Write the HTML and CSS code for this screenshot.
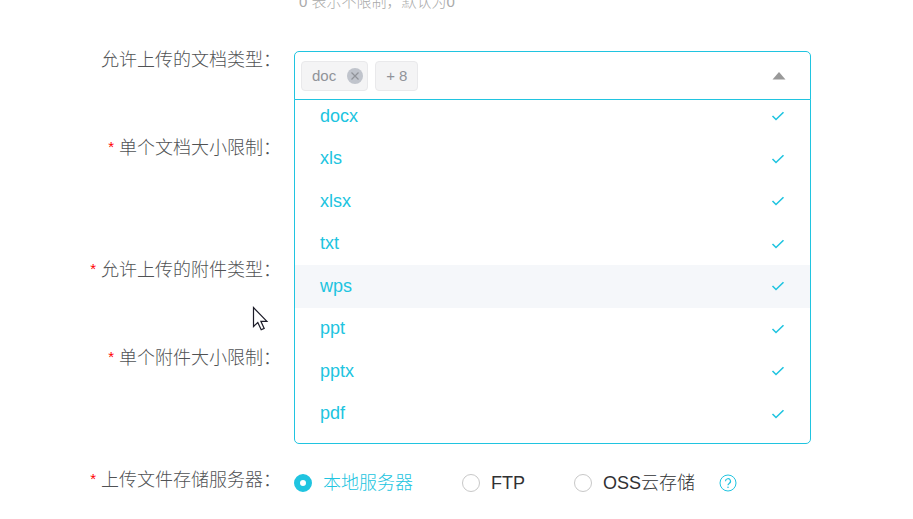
FILE: index.html
```html
<!DOCTYPE html>
<html lang="zh-CN">
<head>
  <meta charset="UTF-8">
  <meta name="viewport" content="width=device-width, initial-scale=1.0">
  <title>上传文件</title>
  <link rel="stylesheet" href="styles.css">
</head>
<body>
  <svg width="0" height="0" class="symbols">
    <symbol id="tick" viewBox="0 0 14 10"><path d="M1.500 5l3.500 3.500L12.500 1.200" fill="none" stroke="#20c4e0" stroke-width="1.600"/></symbol>
  </svg>

  <form class="form">
    <p class="hint">0 表示不限制，默认为0</p>

    <div class="form-item">
      <div class="form-label" id="docTypeLabel">允许上传的文档类型：</div>
      <div class="form-content">
        <div class="select">
          <div class="select-box">
            <span class="tag">doc
              <button type="button" class="tag-close" aria-label="doc">
                <svg viewBox="0 0 16 16" width="16" height="16"><circle cx="8" cy="8" r="8" fill="#c0c4cc"/><path d="M4.500 4.500l7 7M11.500 4.500l-7 7" stroke="#909399" stroke-width="1.200"/></svg>
              </button>
            </span>
            <span class="tag">+ 8</span>
            <button type="button" class="select-arrow" aria-labelledby="docTypeLabel">
              <svg viewBox="0 0 14 8" width="14" height="8"><path d="M7 0l6.500 7.500h-13z" fill="#999"/></svg>
            </button>
          </div>
          <div class="dropdown">
            <div class="options">
              <label class="option">docx<input type="checkbox" checked><svg class="tick"><use href="#tick"/></svg></label>
              <label class="option">xls<input type="checkbox" checked><svg class="tick"><use href="#tick"/></svg></label>
              <label class="option">xlsx<input type="checkbox" checked><svg class="tick"><use href="#tick"/></svg></label>
              <label class="option">txt<input type="checkbox" checked><svg class="tick"><use href="#tick"/></svg></label>
              <label class="option hover">wps<input type="checkbox" checked><svg class="tick"><use href="#tick"/></svg></label>
              <label class="option">ppt<input type="checkbox" checked><svg class="tick"><use href="#tick"/></svg></label>
              <label class="option">pptx<input type="checkbox" checked><svg class="tick"><use href="#tick"/></svg></label>
              <label class="option">pdf<input type="checkbox" checked><svg class="tick"><use href="#tick"/></svg></label>
            </div>
          </div>
        </div>
      </div>
    </div>

    <div class="form-item tall">
      <div class="form-label required">单个文档大小限制：</div>
    </div>

    <div class="form-item">
      <div class="form-label required">允许上传的附件类型：</div>
    </div>

    <div class="form-item tall">
      <div class="form-label required">单个附件大小限制：</div>
    </div>

    <div class="form-item last">
      <div class="form-label required" id="serverLabel">上传文件存储服务器：</div>
      <div class="form-content radio-group" role="radiogroup" aria-labelledby="serverLabel">
        <label class="radio"><input type="radio" name="server" checked><span>本地服务器</span></label>
        <label class="radio"><input type="radio" name="server"><span>FTP</span></label>
        <label class="radio"><input type="radio" name="server"><span>OSS云存储</span></label>
        <button type="button" class="help" aria-label="OSS云存储">
          <svg viewBox="0 0 18 18" width="18" height="18" fill="none" stroke="#20c4e0"><circle cx="9" cy="9" r="8"/><path d="M6.500 7.200a2.500 2.500 0 1 1 3.700 2.200c-.8.500-1.200.9-1.200 1.900" stroke-width="1.200"/><circle cx="9" cy="13.200" r=".8" fill="#20c4e0" stroke="none"/></svg>
        </button>
      </div>
    </div>
  </form>

  <svg class="cursor" viewBox="0 0 17 26" width="17" height="26"><path d="M1.500 1.500v19l4.300-4 3.400 7.300 3-1.400-3.300-7.100h6z" fill="#fff" stroke="#1c1c28" stroke-width="1.200"/></svg>
</body>
</html>
```

FILE: styles.css
```css
body {
  margin: 0;
  background: #fff;
  color: #303133;
  font-family: "Liberation Sans", "Noto Sans CJK SC", sans-serif;
  font-size: 18px;
  font-weight: 300;
}
button {
  display: flex;
  padding: 0;
  border: none;
  background: none;
  cursor: pointer;
}
.symbols {
  display: block;
}
.form {
  padding-right: 102px;
}
.hint {
  height: 51px;
  margin: 0 0 0 299px;
  color: #aaa;
  font-size: 15px;
  line-height: 4px;
}
.form-item {
  display: flex;
  gap: 13px;
  min-height: 88px;
}
.form-item.tall {
  min-height: 122px;
}
.form-item.last {
  min-height: 40px;
}
.form-label {
  flex: none;
  width: 281px;
  color: #505254;
  line-height: 18px;
  text-align: right;
}
.form-label.required::before {
  content: "*";
  margin-right: 5px;
  color: #f00;
  font-size: 15px;
  line-height: 1;
  vertical-align: 2px;
}
.form-content {
  flex: 1;
}

/* multi select */
.select {
  position: relative;
}
.select-box {
  display: flex;
  align-items: center;
  gap: 7px;
  box-sizing: border-box;
  height: 49px;
  padding: 0 24px 0 6px;
  border: 1px solid #20c4e0;
  border-radius: 5px 5px 0 0;
}
.tag {
  display: flex;
  align-items: center;
  gap: 11px;
  box-sizing: border-box;
  height: 30px;
  padding: 0 10px;
  border: 1px solid #e9e9eb;
  border-radius: 4px;
  background: #f4f4f5;
  color: #909399;
  font-size: 15px;
}
.tag:first-child {
  padding-right: 4px;
}
.select-arrow {
  margin-left: auto;
}
.dropdown {
  position: absolute;
  top: 48px;
  left: 0;
  right: 0;
  z-index: 1;
  display: flex;
  flex-direction: column;
  justify-content: flex-end;
  box-sizing: border-box;
  height: 345px;
  padding-bottom: 8px;
  border: 1px solid #20c4e0;
  border-radius: 0 0 5px 5px;
  background: #fff;
  overflow: hidden;
}
.options {
  display: grid;
  grid-template-rows: repeat(8, 1fr);
  flex: none;
  height: 340px;
}
.option {
  display: flex;
  align-items: center;
  padding: 0 25px;
  color: #20c4e0;
  cursor: pointer;
}
.option.hover,
.option:hover {
  background: #f5f7fa;
}
.option input {
  appearance: none;
  width: 0;
  margin: 0 0 0 auto;
}
.tick {
  width: 14px;
  height: 10px;
  visibility: hidden;
}
.option input:checked + .tick {
  visibility: visible;
}

/* radios */
.radio-group {
  display: flex;
  align-items: center;
  height: 24px;
}
.radio {
  display: flex;
  align-items: center;
  gap: 11px;
  margin-right: 49px;
  line-height: 24px;
  cursor: pointer;
}
.radio input {
  appearance: none;
  box-sizing: border-box;
  width: 18px;
  height: 18px;
  margin: 0;
  border: 1px solid #c8c8c8;
  border-radius: 50%;
}
.radio input:checked {
  border: 6px solid #20c4e0;
}
.radio input:checked + span {
  color: #20c4e0;
}
.radio:last-of-type {
  margin-right: 24px;
}

.cursor {
  position: absolute;
  top: 306px;
  left: 252px;
}
```
